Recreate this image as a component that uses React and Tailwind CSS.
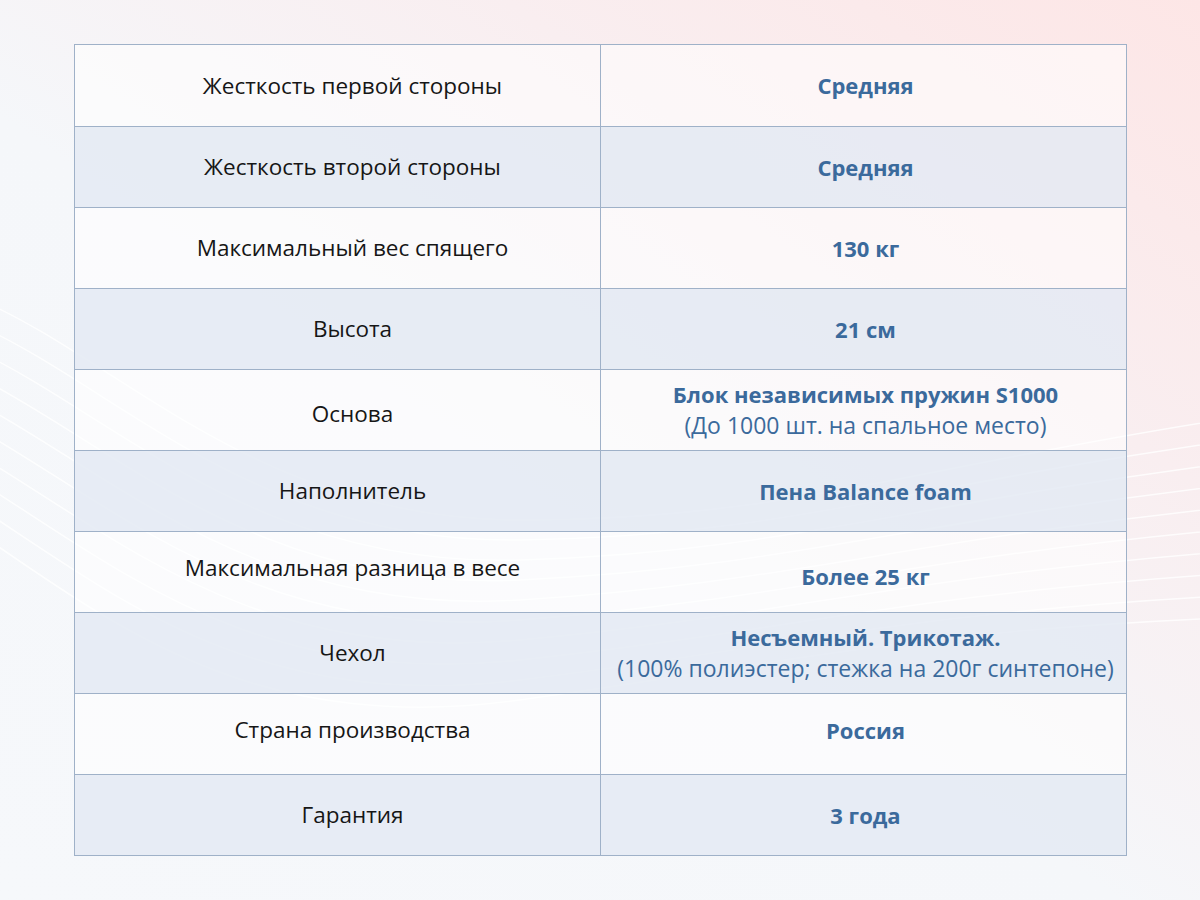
const rows = [
  { name: 'Жесткость первой стороны', value: 'Средняя' },
  { name: 'Жесткость второй стороны', value: 'Средняя' },
  { name: 'Максимальный вес спящего', value: '130 кг' },
  { name: 'Высота', value: '21 см' },
  { name: 'Основа', value: 'Блок независимых пружин S1000', note: '(До 1000 шт. на спальное место)', nameShift: 'mt-2' },
  { name: 'Наполнитель', value: 'Пена Balance foam' },
  { name: 'Максимальная разница в весе', value: 'Более 25 кг', nameShift: '-mt-2', valueShift: 'mt-2' },
  { name: 'Чехол', value: 'Несъемный. Трикотаж.', note: '(100% полиэстер; стежка на 200г синтепоне)' },
  { name: 'Страна производства', value: 'Россия', nameShift: '-mt-2', valueShift: '-mt-2' },
  { name: 'Гарантия', value: '3 года' },
];

function Waves() {
  return (
    <svg className="absolute inset-0 h-full w-full" viewBox="0 0 1200 900" preserveAspectRatio="none">
      {[0, 1, 2, 3, 4, 5, 6, 7, 8, 9].map((i) => (
        <path
          key={i}
          d={`M -20 ${300 + i * 26} C 120 ${360 + i * 30}, 260 ${520 + i * 24}, 520 ${520 + i * 20} S 900 ${470 + i * 18}, 1220 ${420 + i * 22}`}
          fill="none"
          stroke="#ffffff"
          strokeOpacity="0.8"
          strokeWidth="1.5"
        />
      ))}
    </svg>
  );
}

export default function App() {
  return (
    <div
      className="relative h-[900px] w-[1200px] overflow-hidden bg-[linear-gradient(215deg,#fde6e6_0%,#f9eef0_28%,#f5f7fa_55%,#f6f8fb_100%)]"
      style={{ fontFamily: '"Open Sans", "Noto Sans", sans-serif' }}
    >
      <Waves />
      <div className="relative pl-[74px] pt-[44px]">
        <div className="w-[1053px] border border-[#9fb1c8]">
          {rows.map((row, i) => (
            <div
              key={i}
              className={`grid h-[81px] grid-cols-[526px_1fr] ${i > 0 ? 'border-t border-[#9fb1c8]' : ''} ${i % 2 === 1 ? 'bg-[#e4eaf3]/85' : 'bg-white/55'}`}
            >
              <div className="flex items-center justify-center border-r border-[#9fb1c8] pl-[30px] text-[22.5px] text-[#161616]">
                <span className={row.nameShift ?? ''}>{row.name}</span>
              </div>
              <div className="flex flex-col items-center justify-center pl-[4px] text-[22px] leading-[31px] text-[#3b6a9c]">
                <span className={`font-bold ${row.valueShift ?? ''}`}>{row.value}</span>
                {row.note && <span className="text-[23px]">{row.note}</span>}
              </div>
            </div>
          ))}
        </div>
      </div>
    </div>
  );
}
